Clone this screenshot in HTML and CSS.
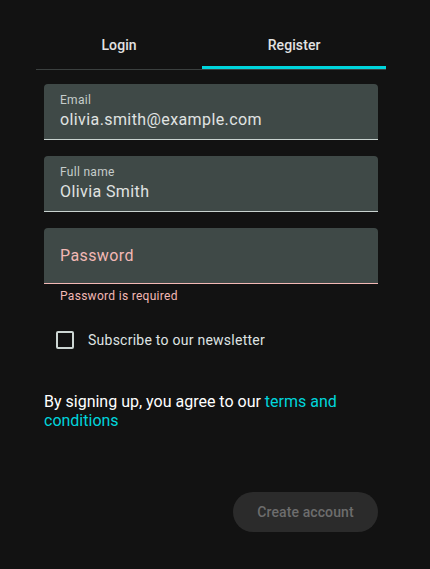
FILE: index.html
```html
<!DOCTYPE html>
<html>
<head>
<meta charset="utf-8">
<link rel="stylesheet" href="styles.css">
</head>
<body>
<div class="page">
  <div class="tabs">
    <div class="tab">Login</div>
    <div class="tab active">Register</div>
  </div>
  <form class="form">
    <div class="field">
      <span class="label">Email</span>
      <span class="value">olivia.smith@example.com</span>
    </div>
    <div class="field">
      <span class="label">Full name</span>
      <span class="value">Olivia Smith</span>
    </div>
    <div class="group">
      <div class="field error">
        <span class="placeholder">Password</span>
      </div>
      <div class="hint">Password is required</div>
    </div>
    <label class="check">
      <span class="box"></span>
      <span class="check-label">Subscribe to our newsletter</span>
    </label>
    <p class="terms">By signing up, you agree to our <a class="link">terms and conditions</a></p>
    <div class="actions">
      <button type="button" class="btn">Create account</button>
    </div>
  </form>
</div>
</body>
</html>
```
FILE: styles.css
```css
html, body {
  margin: 0;
  padding: 0;
  background: #121212;
  font-family: Roboto, "Noto Sans", sans-serif;
  color: #e0e3e2;
}
.page {
  width: 350px;
  margin-left: 36px;
  padding-top: 21px;
}
.tabs {
  display: flex;
  border-bottom: 1px solid #3b403f;
}
.tab {
  flex: 1 1 auto;
  height: 48px;
  display: flex;
  align-items: center;
  justify-content: center;
  font-size: 14px;
  font-weight: 500;
  color: #e2e2e2;
  letter-spacing: 0.1px;
}
.tab.active {
  box-shadow: inset 0 -3px 0 #00d5dc;
}
.form {
  margin: 14px 8px 0;
  display: flex;
  flex-direction: column;
}
.field {
  background: #3f4947;
  border-radius: 4px 4px 0 0;
  border-bottom: 1px solid #c9d3d0;
  padding: 8px 16px 0;
  box-sizing: content-box;
  height: 47px;
  display: flex;
  flex-direction: column;
  margin-bottom: 16px;
}
.label {
  font-size: 12px;
  line-height: 16px;
  color: #c6cdcb;
  letter-spacing: 0.3px;
}
.value {
  font-size: 16px;
  line-height: 24px;
  color: #e0e3e2;
  letter-spacing: 0.4px;
}
.group {
  margin-bottom: 16px;
}
.field.error {
  margin-bottom: 0;
  border-bottom-color: #f2b8b5;
  justify-content: center;
  padding-top: 0;
  height: 55px;
}
.placeholder {
  font-size: 16px;
  line-height: 24px;
  color: #f2b8b5;
  letter-spacing: 0.4px;
}
.hint {
  padding: 4px 16px 0;
  font-size: 12px;
  line-height: 16px;
  color: #f2b8b5;
  letter-spacing: 0.3px;
}
.check {
  display: flex;
  align-items: center;
  height: 40px;
  padding-left: 12px;
}
.box {
  width: 14px;
  height: 14px;
  border: 2px solid #cdd6d3;
  border-radius: 2px;
  flex: none;
}
.check-label {
  margin-left: 14px;
  font-size: 14px;
  color: #dfe3e2;
  letter-spacing: 0.25px;
}
.terms {
  margin: 32px 0 0;
  font-size: 16px;
  line-height: 19px;
  color: #ffffff;
}
.link {
  color: #00d5dc;
}
.actions {
  display: flex;
  justify-content: flex-end;
  margin-top: 62px;
}
.btn {
  height: 40px;
  width: 145px;
  border: none;
  border-radius: 20px;
  background: #2b2b2b;
  color: #6d6d6d;
  font-family: Roboto, "Noto Sans", sans-serif;
  font-size: 14px;
  font-weight: 500;
  letter-spacing: 0.1px;
  padding: 0;
}
```
